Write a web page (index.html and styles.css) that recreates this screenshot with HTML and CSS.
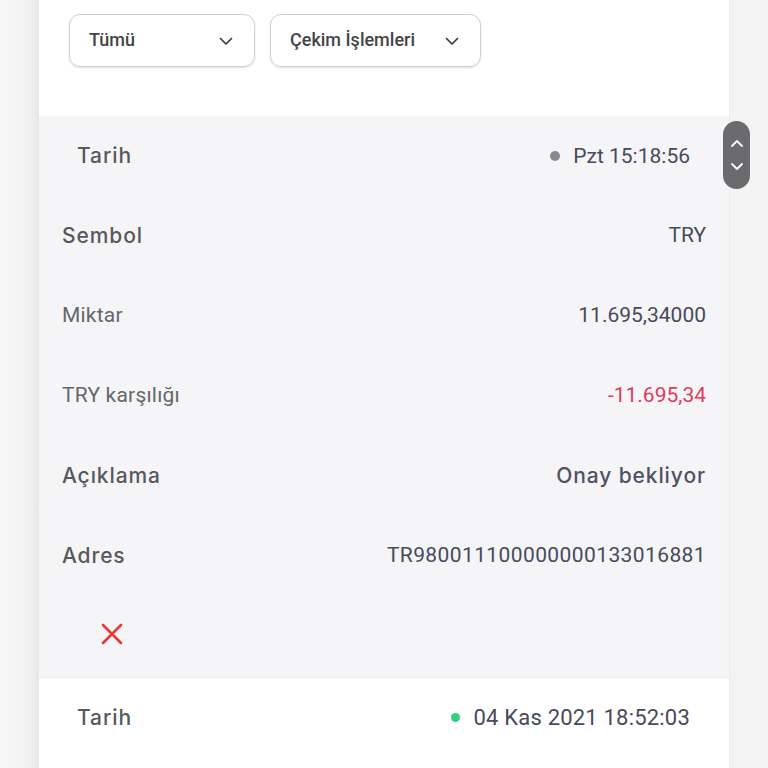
FILE: index.html
```html
<!DOCTYPE html>
<html lang="tr">
<head>
  <meta charset="UTF-8">
  <meta name="viewport" content="width=device-width, initial-scale=1">
  <title>İşlem Geçmişi</title>
  <link rel="stylesheet" href="styles.css">
</head>
<body>
  <div class="page">
    <div class="card">
      <div class="filters">
        <div class="select select-small">
          <span>Tümü</span>
          <svg class="chev" width="16" height="10" viewBox="0 0 16 10"><path d="M2.5 2.5l5.5 5.5 5.5-5.5" fill="none" stroke="#3a3a3a" stroke-width="1.7" stroke-linecap="round" stroke-linejoin="round"/></svg>
        </div>
        <div class="select select-wide">
          <span>Çekim İşlemleri</span>
          <svg class="chev" width="16" height="10" viewBox="0 0 16 10"><path d="M2.5 2.5l5.5 5.5 5.5-5.5" fill="none" stroke="#3a3a3a" stroke-width="1.7" stroke-linecap="round" stroke-linejoin="round"/></svg>
        </div>
      </div>

      <div class="record active">
        <div class="row row-date">
          <span class="label">Tarih</span>
          <span class="value"><i class="dot dot-grey"></i>Pzt 15:18:56</span>
        </div>
        <div class="row">
          <span class="label">Sembol</span>
          <span class="value">TRY</span>
        </div>
        <div class="row">
          <span class="label light">Miktar</span>
          <span class="value">11.695,34000</span>
        </div>
        <div class="row">
          <span class="label light">TRY karşılığı</span>
          <span class="value negative">-11.695,34</span>
        </div>
        <div class="row">
          <span class="label">Açıklama</span>
          <span class="value value-text">Onay bekliyor</span>
        </div>
        <div class="row">
          <span class="label">Adres</span>
          <span class="value value-code">TR980011100000000133016881</span>
        </div>
        <div class="row row-cancel">
          <svg width="22" height="22" viewBox="0 0 22 22"><path d="M2 2l18 18M20 2L2 20" stroke="#e53935" stroke-width="2.6" stroke-linecap="round"/></svg>
        </div>
      </div>

      <div class="record">
        <div class="row row-date">
          <span class="label">Tarih</span>
          <span class="value value-long"><i class="dot dot-green"></i>04 Kas 2021 18:52:03</span>
        </div>
      </div>
    </div>

    <div class="scroller">
      <svg width="14" height="10" viewBox="0 0 14 10"><path d="M2 7l5-5 5 5" fill="none" stroke="#fff" stroke-width="1.8" stroke-linecap="round" stroke-linejoin="round"/></svg>
      <svg width="14" height="10" viewBox="0 0 14 10"><path d="M2 3l5 5 5-5" fill="none" stroke="#fff" stroke-width="1.8" stroke-linecap="round" stroke-linejoin="round"/></svg>
    </div>
  </div>
</body>
</html>
```

FILE: styles.css
```css
body {
  margin: 0;
  background: #f3f3f4;
  font-family: Inter, sans-serif;
}
.page {
  position: relative;
  height: 768px;
  overflow: hidden;
  background: linear-gradient(to right, #f7f7f7 0, #f1f1f1 30px, #e6e6e6 39px, #f3f3f4 39px);
}
.card {
  margin-left: 39px;
  width: 690px;
  height: 768px;
  background: #fff;
  border-right: 1px solid #ececee;
}

.filters {
  display: flex;
  gap: 15px;
  padding: 14px 0 0 30px;
  height: 116px;
  box-sizing: border-box;
}
.select {
  display: flex;
  align-items: center;
  justify-content: space-between;
  height: 53px;
  box-sizing: border-box;
  border: 1px solid #cfcfcf;
  border-radius: 11px;
  box-shadow: 0 1px 2px rgba(0,0,0,0.12);
  padding: 0 20px 0 19px;
  font-family: Roboto, sans-serif;
  font-size: 18px;
  font-weight: 500;
  color: #454545;
}
.select span {
  margin-top: -3px;
}
.select-small {
  width: 186px;
}
.select-wide {
  width: 211px;
}

.record {
  padding: 0 23px 4px;
}
.record.active {
  background: #f5f5f7;
  border-bottom: 1px solid #ededf0;
}
.row {
  display: flex;
  justify-content: space-between;
  align-items: center;
  height: 80px;
}
.row-date {
  padding: 0 16px 0 15px;
  height: 79px;
}
.label {
  font-size: 21px;
  font-weight: 500;
  color: #58585d;
  letter-spacing: 0.9px;
}
.label.light {
  font-family: Roboto, sans-serif;
  font-weight: 400;
  font-size: 21px;
  color: #66666b;
  letter-spacing: 0.2px;
}
.value {
  font-family: Roboto, sans-serif;
  font-size: 21px;
  color: #474a5c;
  display: flex;
  align-items: center;
}
.value.negative {
  color: #e23a5e;
}
.value-text {
  font-family: Inter, sans-serif;
  font-weight: 500;
  font-size: 21px;
  color: #505263;
  letter-spacing: 0.9px;
}
.value-code {
  letter-spacing: 0.4px;
}
.value-long {
  font-size: 22px;
  letter-spacing: 0.2px;
}
.dot {
  width: 10px;
  height: 10px;
  border-radius: 50%;
  margin-right: 13px;
}
.dot-grey {
  background: #8a8a8e;
}
.dot-green {
  width: 9px;
  height: 9px;
  background: #2fcf82;
}
.row-cancel {
  justify-content: flex-start;
  padding-left: 39px;
  height: 78px;
}

.scroller {
  position: absolute;
  left: 723px;
  top: 121px;
  width: 27px;
  height: 68px;
  border-radius: 14px;
  background: #6b6b6d;
  display: flex;
  flex-direction: column;
  align-items: center;
  justify-content: center;
  gap: 12px;
}
```
